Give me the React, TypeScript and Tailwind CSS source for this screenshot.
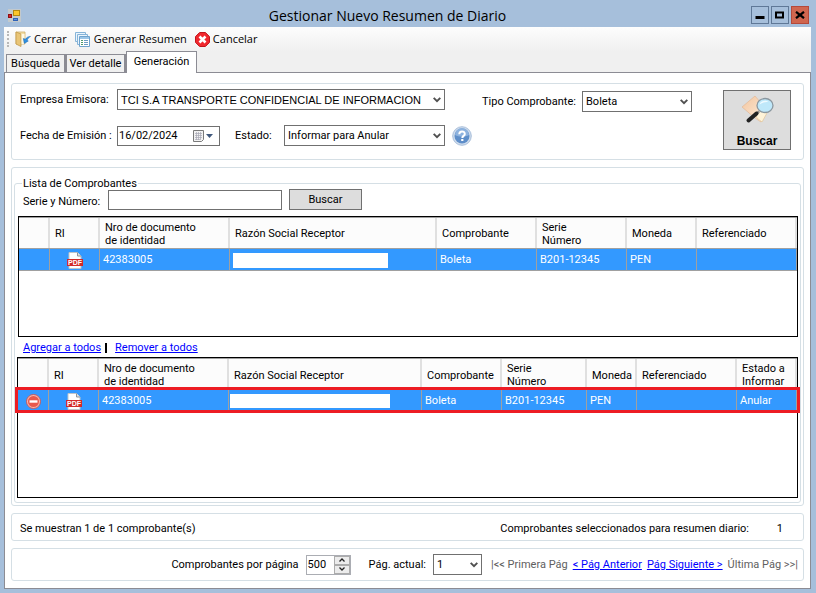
import { useState, type ReactNode } from 'react'

type Comprobante = {
  documento: string
  tipo: string
  serie: string
  moneda: string
  estado: string
}

const DISPONIBLES: Comprobante[] = [
  { documento: '42383005', tipo: 'Boleta', serie: 'B201-12345', moneda: 'PEN', estado: '' },
]

const SELECCIONADOS: Comprobante[] = [
  { documento: '42383005', tipo: 'Boleta', serie: 'B201-12345', moneda: 'PEN', estado: 'Anular' },
]

const LINK = 'text-[#0000ff] underline'
const TH = 'border-r-2 border-[#e0e0e0] bg-[#fcfcfc] px-[5px] pt-px text-left font-normal leading-[13px]'
const TD = 'border-r border-[#a0a0a0] px-[3px] whitespace-nowrap'

function AppIcon() {
  return (
    <svg width="14" height="14" viewBox="0 0 14 14" aria-hidden="true">
      <rect width="13" height="13" fill="#c3c9cc" />
      <rect x="5.500" y="1.500" width="6" height="5" fill="#fcc62c" stroke="#b58a12" />
      <rect x=".5" y="5.500" width="3" height="3" fill="#d8232a" stroke="#8e1014" />
      <rect x="5.500" y="9.500" width="4" height="2" fill="#5b92ea" stroke="#2d62b8" />
    </svg>
  )
}

function DoorIcon() {
  return (
    <svg width="16" height="16" viewBox="0 0 16 16" aria-hidden="true">
      <path d="M1 1h9v12H1z" fill="#f2dca4" stroke="#d0b16a" strokeWidth=".8" />
      <path d="M1 1l5 2v12.500L1 13z" fill="#e9c577" stroke="#c29a4b" strokeWidth=".8" />
      <path d="M6.500 3h3v10h-3z" fill="#fff8e2" />
      <path d="M15.500 5.500c-2.500 0-4 1-5 2.700L8.300 7.500l1 5 4-2.500-1.200-.7C12.800 7.500 13.800 6.500 15.500 5.500z" fill="#2f8fe0" stroke="#1766ae" strokeWidth=".5" />
    </svg>
  )
}

function PagesIcon() {
  return (
    <svg width="16" height="16" viewBox="0 0 16 16" aria-hidden="true">
      <path d="M.5 1.500h10v9H.5z" fill="#eaf4fc" stroke="#86b4d8" />
      <path d="M2.500 3.500h10v10h-10z" fill="#eaf4fc" stroke="#86b4d8" />
      <path d="M4.500 5.500h10v10h-10z" fill="#fff" stroke="#6fa3cd" />
      <path d="M5 6h9v2H5z" fill="#9cc6e8" />
      <path d="M6 9.500h2M6 11.500h2M6 13.500h2" stroke="#4f9a6b" />
      <path d="M9 9.500h4M9 11.500h4M9 13.500h4" stroke="#6c9cc4" />
    </svg>
  )
}

function CancelIcon() {
  return (
    <svg width="15" height="15" viewBox="0 0 15 15" aria-hidden="true">
      <path d="M4.600.5h5.800l4.100 4.100v5.800l-4.100 4.100H4.600L.5 10.400V4.600z" fill="#f0282e" stroke="#c0161c" />
      <path d="M4.500 4.500l6 6M10.500 4.500l-6 6" stroke="#fff" strokeWidth="2.600" />
    </svg>
  )
}

function HelpIcon() {
  return (
    <svg width="20" height="20" viewBox="0 0 20 20" aria-hidden="true">
      <circle cx="10" cy="10" r="9.300" fill="#cfdcec" stroke="#a9bfdb" />
      <circle cx="10" cy="10" r="7.500" fill="#5e8ec9" />
      <path d="M3 9a7 7 0 0 1 14 0c-4 2-10 2-14 0z" fill="#8db2de" />
      <path d="M7.300 8.200c0-3.700 5.500-3.700 5.500-.3 0 2-2.500 2-2.500 4" fill="none" stroke="#fff" strokeWidth="2" />
      <rect x="9.200" y="13" width="2.200" height="2" fill="#fff" />
    </svg>
  )
}

function SearchIcon() {
  return (
    <svg width="33" height="29" viewBox="0 0 33 29" aria-hidden="true">
      <defs>
        <linearGradient id="paper" x1="0" y1="0" x2="1" y2="1">
          <stop offset="0" stopColor="#f3c6a0" />
          <stop offset="1" stopColor="#fdeedd" />
        </linearGradient>
      </defs>
      <path d="M1 12L14 1l12 14-6 12-6-4z" fill="url(#paper)" stroke="#e0b48e" strokeWidth=".6" />
      <path d="M14 17l9-1 3 2-5 9-5-4z" fill="#fff3d8" stroke="#dcbf90" strokeWidth=".6" />
      <path d="M18 16.500l-3 2.500" stroke="#8b8b8b" strokeWidth="2.500" />
      <path d="M15.500 18.500L7.500 25.500" stroke="#222" strokeWidth="4" strokeLinecap="round" />
      <ellipse cx="24" cy="10.500" rx="8" ry="7" fill="#bfe8fa" stroke="#8b979f" strokeWidth="1.300" />
      <path d="M18.500 9.500c1-3.500 6-5 9-2.500-3 0-6 .5-9 2.500z" fill="#effaff" />
    </svg>
  )
}

function PdfIcon() {
  return (
    <svg width="16" height="17" viewBox="0 0 16 17" className="mx-auto block" aria-label="PDF">
      <path d="M2 .5h8.500L14 4v12.500H2z" fill="#fff" stroke="#bfc3c8" />
      <path d="M10.500.5V4H14" fill="#dfe3e8" stroke="#8e949b" />
      <rect y="7" width="16" height="7" fill="#d22a2a" />
      <text x="8" y="13" textAnchor="middle" fontSize="7" fontWeight="bold" fontFamily="Liberation Sans, sans-serif" fill="#fff">PDF</text>
    </svg>
  )
}

function RemoveIcon() {
  return (
    <svg width="15" height="15" viewBox="0 0 15 15" aria-hidden="true">
      <circle cx="7.500" cy="7.500" r="7" fill="#f5b7ae" stroke="#d4483e" strokeWidth=".8" />
      <circle cx="7.500" cy="7.500" r="5.500" fill="#e8584c" />
      <rect x="3.500" y="6.300" width="8" height="2.400" fill="#fff" />
    </svg>
  )
}

function Combo({ id, value, className }: { id: string; value: string; className: string }) {
  return (
    <div className={`relative ${className}`}>
      <select id={id} defaultValue={value} className="h-full w-full appearance-none border border-[#707070] bg-white pl-[3px] pr-4 leading-[18px]">
        <option>{value}</option>
      </select>
      <svg width="8" height="6" viewBox="0 0 8 6" className="pointer-events-none absolute right-1 top-1/2 -mt-[3px]" aria-hidden="true">
        <path d="M.7.8L4 4.200 7.300.8" fill="none" stroke="#505050" strokeWidth="1.900" />
      </svg>
    </div>
  )
}

function Panel({ children, className }: { children: ReactNode; className: string }) {
  return <section className={`rounded-[3px] border border-[#d5dfe5] ${className}`}>{children}</section>
}

function TitleBar() {
  const box = 'flex size-[18px] items-center justify-center border'
  return (
    <header className="flex h-[27px] items-center">
      <div className="w-5 pl-1 pt-1"><AppIcon /></div>
      <h1 className="flex-1 pt-1 text-center font-['Open_Sans',sans-serif] text-[14px]">Gestionar Nuevo Resumen de Diario</h1>
      <div className="flex w-[60px] gap-[2px] pt-[3px]">
        <button aria-label="Minimizar" className={`${box} border-[#5f7897]`}>
          <svg width="10" height="8" viewBox="0 0 10 8"><path d="M.5 5h9v3h-9z" /></svg>
        </button>
        <button aria-label="Maximizar" className={`${box} border-[#5f7897]`}>
          <svg width="10" height="8" viewBox="0 0 10 8"><path d="M1 1.500h7v5H1z" fill="none" stroke="#000" strokeWidth="2" /></svg>
        </button>
        <button aria-label="Cerrar ventana" className={`${box} border-[#b5493a] bg-[#d0664f]`}>
          <svg width="10" height="8" viewBox="0 0 10 8"><path d="M1 .8l8 6.400M9 .8L1 7.200" stroke="#000" strokeWidth="2.200" /></svg>
        </button>
      </div>
    </header>
  )
}

function Toolbar() {
  const item = 'flex items-center gap-[3px]'
  return (
    <div role="toolbar" className="flex h-6 items-center bg-linear-to-b from-[#fdfdfd] to-[#f0f0f0] pl-[3px] font-['Open_Sans',sans-serif]">
      <div className="mr-[6px] h-4 border-l-2 border-dotted border-[#b8b8b8]" />
      <button className={`${item} mr-2`}><DoorIcon />Cerrar</button>
      <button className={`${item} mr-2`}><PagesIcon />Generar Resumen</button>
      <button className={item}><CancelIcon />Cancelar</button>
    </div>
  )
}

function Tabs() {
  const [active, setActive] = useState('Generación')
  return (
    <div role="tablist" className="flex h-[21px] items-end bg-[#f0f0f0] pl-[2px]">
      {['Búsqueda', 'Ver detalle', 'Generación'].map((t) => (
        <button
          key={t}
          role="tab"
          aria-selected={t === active}
          onClick={() => setActive(t)}
          className={
            t === active
              ? 'z-10 -mb-px h-[22px] w-[71px] border border-b-0 border-[#8c8c94] bg-white pb-[2px]'
              : 'h-[18px] w-[60px] whitespace-nowrap border border-b-0 border-r-2 border-[#8c8c94] last:border-r'
          }
        >
          {t}
        </button>
      ))}
    </div>
  )
}

function Filtros() {
  return (
    <Panel className="flex min-h-[77px] items-start pl-2 pr-3 pt-[5px]">
      <div className="flex flex-col gap-[15px]">
        <div className="flex items-center">
          <label htmlFor="empresa" className="w-[97px]">Empresa Emisora:</label>
          <Combo
            id="empresa"
            value="TCI S.A TRANSPORTE CONFIDENCIAL DE INFORMACION"
            className="h-[21px] w-[328px] font-['Liberation_Sans',sans-serif]"
          />
        </div>
        <div className="flex items-center">
          <label htmlFor="fecha" className="w-[97px]">Fecha de Emisión :</label>
          <div className="flex h-5 w-[103px] items-center border border-[#707070]">
            <input id="fecha" defaultValue="16/02/2024" className="w-[75px] pl-px outline-none" />
            <button aria-label="Abrir calendario" className="flex items-center">
              <svg width="22" height="12" viewBox="0 0 22 12">
                <path d="M.5.5h10v9l-2 2h-8z" fill="#f2f2f2" stroke="#7a7a7a" />
                <path d="M2 3.500h7M2 5.500h7M2 7.500h7M2 9.500h5M3.500 2v8M5.500 2v8M7.500 2v8" stroke="#a8a8b4" strokeWidth=".7" />
                <path d="M13 4h7l-3.500 4z" fill="#40587c" />
              </svg>
            </button>
          </div>
          <label htmlFor="estado" className="ml-[15px] w-[49px]">Estado:</label>
          <Combo id="estado" value="Informar para Anular" className="h-[21px] w-[161px]" />
          <button aria-label="Ayuda" className="ml-[7px]"><HelpIcon /></button>
        </div>
      </div>
      <div className="ml-[10px] mt-[2px] flex items-center">
        <label htmlFor="tipo" className="w-[100px]">Tipo Comprobante:</label>
        <Combo id="tipo" value="Boleta" className="h-[21px] w-[110px]" />
      </div>
      <button className="ml-auto mt-px flex h-[60px] w-[68px] flex-col items-center justify-between border border-[#707070] bg-[#dddddd] pt-1 font-['Liberation_Sans',sans-serif] text-[12px] font-bold leading-[16px]">
        <SearchIcon />
        Buscar
      </button>
    </Panel>
  )
}

function Grilla({ rows, seleccion }: { rows: Comprobante[]; seleccion: boolean }) {
  return (
    <div className={`border border-black bg-white ${seleccion ? 'min-h-[141px]' : 'ml-px min-h-[121px]'}`}>
      <table className="w-full table-fixed border-separate border-spacing-0 border-t border-[#a0a0a0]">
        <colgroup>
          <col className="w-[31px]" />
          <col className="w-[50px]" />
          <col className="w-[130px]" />
          <col />
          <col className={seleccion ? 'w-[80px]' : 'w-[100px]'} />
          <col className={seleccion ? 'w-[85px]' : 'w-[90px]'} />
          <col className={seleccion ? 'w-[50px]' : 'w-[70px]'} />
          <col className="w-[100px]" />
          {seleccion && <col className="w-[60px]" />}
        </colgroup>
        <thead>
          <tr className={seleccion ? 'h-[31px]' : 'h-[30px]'}>
            <th className={TH}></th>
            <th className={TH}>RI</th>
            <th className={TH}>Nro de documento<br />de identidad</th>
            <th className={TH}>Razón Social Receptor</th>
            <th className={TH}>Comprobante</th>
            <th className={TH}>Serie<br />Número</th>
            <th className={`${TH} whitespace-nowrap`}>Moneda</th>
            <th className={TH}>Referenciado</th>
            {seleccion && <th className={TH}>Estado a<br />Informar</th>}
          </tr>
        </thead>
        <tbody>
          {rows.map((r) => (
            <tr
              key={r.serie}
              className={`bg-[#3399ff] text-white ${
                seleccion
                  ? 'h-5 outline-[3px] outline-[#ed1c24] [&>td]:pt-[2px]'
                  : 'h-[23px] [&>td]:border-y [&>td]:border-[#a0a0a0] [&>td]:pt-px'
              }`}
            >
              <td className={TD}>
                {seleccion && <button aria-label="Remover" className="mx-auto block"><RemoveIcon /></button>}
              </td>
              <td className={TD}><PdfIcon /></td>
              <td className={TD}>{r.documento}</td>
              <td className={seleccion ? 'border-r border-[#a0a0a0] pl-px' : TD}>
                <div className={seleccion ? 'h-[14px] w-[160px] bg-white' : 'h-[15px] w-[155px] bg-white'} />
              </td>
              <td className={TD}>{r.tipo}</td>
              <td className={TD}>{r.serie}</td>
              <td className={TD}>{r.moneda}</td>
              <td className={TD}></td>
              {seleccion && <td className={TD}>{r.estado}</td>}
            </tr>
          ))}
        </tbody>
      </table>
    </div>
  )
}

function Listado() {
  return (
    <Panel className="px-[2px] pb-[2px] pt-[10px]">
      <fieldset className="min-w-0 rounded-[3px] border border-[#d5dfe5] pb-1 pl-[2px] pr-[2px]">
        <legend className="ml-[5px] px-px leading-[11px]">Lista de Comprobantes</legend>
        <div className="mb-[6px] flex items-center pl-[6px]">
          <label htmlFor="serie" className="w-[85px] pt-[5px]">Serie y Número:</label>
          <input id="serie" className="h-5 w-[174px] border border-[#707070] bg-white px-1 outline-none" />
          <button className="ml-[7px] h-[21px] w-[73px] border border-[#707070] bg-[#dddddd]">Buscar</button>
        </div>
        <Grilla rows={DISPONIBLES} seleccion={false} />
        <div className="flex h-5 items-center pl-[6px] pt-[2px]">
          <a href="#agregar" className={LINK}>Agregar a todos</a>
          <span className="mx-1 h-[10px] w-[2px] bg-black" />
          <a href="#remover" className={`${LINK} ml-1`}>Remover a todos</a>
        </div>
        <Grilla rows={SELECCIONADOS} seleccion />
      </fieldset>
    </Panel>
  )
}

function Paginacion() {
  const [cantidad, setCantidad] = useState(500)
  const step = 'flex h-[9px] w-[16px] items-center justify-center border border-[#acacac] bg-[#ececec]'
  return (
    <Panel className="flex h-[33px] items-center justify-end pr-[5px]">
      <label htmlFor="cantidad">Comprobantes por página</label>
      <div className="ml-[7px] flex h-5 w-[45px] items-center border border-[#abadb3]">
        <input
          id="cantidad"
          type="number"
          value={cantidad}
          onChange={(e) => setCantidad(Number(e.target.value))}
          className="w-[27px] appearance-none pl-px outline-none [&::-webkit-inner-spin-button]:appearance-none"
        />
        <div className="flex flex-col">
          <button aria-label="Más" onClick={() => setCantidad(cantidad + 1)} className={step}>
            <svg width="6" height="4" viewBox="0 0 6 4"><path d="M.5 3.500L3 1l2.500 2.500" fill="none" stroke="#222" strokeWidth="1.300" /></svg>
          </button>
          <button aria-label="Menos" onClick={() => setCantidad(cantidad - 1)} className={step}>
            <svg width="6" height="4" viewBox="0 0 6 4"><path d="M.5.5L3 3 5.500.5" fill="none" stroke="#222" strokeWidth="1.300" /></svg>
          </button>
        </div>
      </div>
      <label htmlFor="pagina" className="ml-[18px]">Pág. actual:</label>
      <Combo id="pagina" value="1" className="ml-[7px] h-[21px] w-[49px]" />
      <nav className="ml-[9px] flex gap-[5px] whitespace-nowrap text-[#606060]">
        <span>|&lt;&lt; Primera Pág</span>
        <a href="#anterior" className={LINK}>&lt; Pág Anterior</a>
        <a href="#siguiente" className={LINK}>Pág Siguiente &gt;</a>
        <span>Última Pág &gt;&gt;|</span>
      </nav>
    </Panel>
  )
}

export default function App() {
  return (
    <div className="flex min-h-screen flex-col bg-[#a6bfdb] pb-1 pl-1 pr-[5px] font-['Roboto','Liberation_Sans',sans-serif] text-[11px] leading-[14px] text-black">
      <TitleBar />
      <Toolbar />
      <Tabs />
      <main className="flex flex-1 flex-col gap-[7px] border border-[#8c8c94] bg-white px-[6px] pb-[7px] pt-[10px]">
        <Filtros />
        <Listado />
        <Panel className="flex h-7 items-center pl-2 pr-5 pt-1">
          <p>Se muestran 1 de 1 comprobante(s)</p>
          <p className="ml-auto">Comprobantes seleccionados para resumen diario:</p>
          <p className="w-[34px] text-right">1</p>
        </Panel>
        <Paginacion />
      </main>
    </div>
  )
}
